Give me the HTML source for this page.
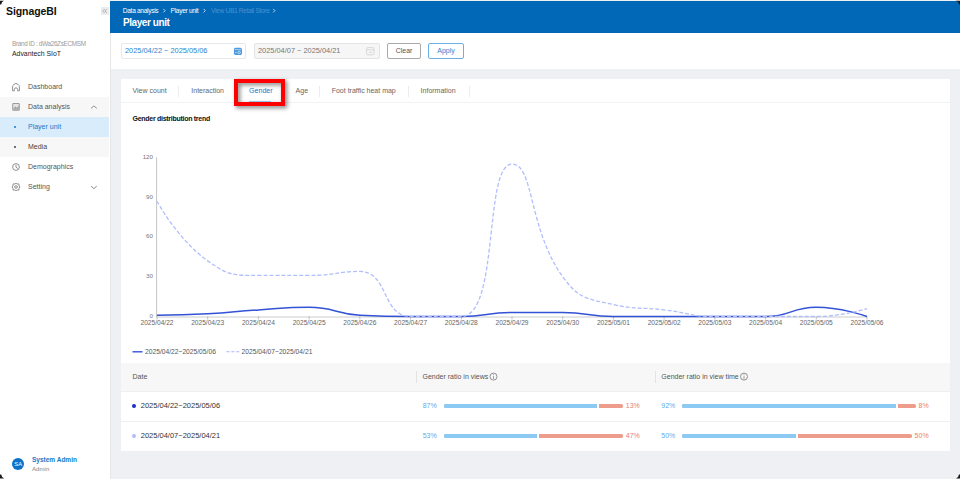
<!DOCTYPE html>
<html><head><meta charset="utf-8"><style>
html,body{margin:0;padding:0;width:960px;height:480px;overflow:hidden;background:#fff;font-family:"Liberation Sans", sans-serif;}
</style></head><body>
<div style="position:relative;width:960px;height:480px;overflow:hidden;">
<div style="position:absolute;left:110px;top:0px;width:850px;height:480px;background:#eff0f4"></div>
<div style="position:absolute;left:0px;top:0px;width:110px;height:480px;background:#fff"></div>
<div style="position:absolute;left:109.7px;top:33px;width:1.2px;height:447px;background:#e6e6ea"></div>
<div style="position:absolute;left:110px;top:1px;width:850px;height:32px;background:#0068b7"></div>
<div style="position:absolute;left:111px;top:33px;width:849px;height:36px;background:#fff"></div>
<div style="position:absolute;top:5.20px;line-height:12px;font-size:10.5px;color:#111;font-weight:bold;white-space:nowrap;letter-spacing:-0.08px;left:6px;">SignageBI</div>
<div style="position:absolute;left:101px;top:7px;width:8px;height:8px;background:#ececec"></div>
<svg style="position:absolute;left:0;top:0" width="110" height="20"><g fill="none" stroke="#9a9a9a" stroke-width="0.7"><path d="M104.6,9 L102.6,11 L104.6,13"/><path d="M106.8,9 L104.8,11 L106.8,13"/></g></svg>
<div style="position:absolute;top:37.60px;line-height:12px;font-size:6.4px;color:#9a9a9a;font-weight:normal;white-space:nowrap;letter-spacing:-0.34px;left:12px;">Brand ID : dWa26ZsECMSM</div>
<div style="position:absolute;top:47.50px;line-height:12px;font-size:6.9px;color:#222;font-weight:normal;white-space:nowrap;left:12px;">Advantech SIoT</div>
<div style="position:absolute;left:0px;top:97px;width:109.2px;height:20px;background:#f7f7f7"></div>
<div style="position:absolute;left:0px;top:117px;width:109.2px;height:20px;background:#d9ecfb"></div>
<div style="position:absolute;left:0px;top:137px;width:109.2px;height:20px;background:#f7f7f7"></div>
<div style="position:absolute;top:81.00px;line-height:12px;font-size:7px;color:#555;font-weight:normal;white-space:nowrap;left:28px;">Dashboard</div>
<div style="position:absolute;top:101.00px;line-height:12px;font-size:7px;color:#555;font-weight:normal;white-space:nowrap;left:28px;">Data analysis</div>
<div style="position:absolute;top:121.00px;line-height:12px;font-size:7px;color:#1a78c8;font-weight:normal;white-space:nowrap;left:28px;">Player unit</div>
<div style="position:absolute;top:141.00px;line-height:12px;font-size:7px;color:#444;font-weight:normal;white-space:nowrap;left:28px;">Media</div>
<div style="position:absolute;top:161.00px;line-height:12px;font-size:7px;color:#555;font-weight:normal;white-space:nowrap;left:28px;">Demographics</div>
<div style="position:absolute;top:181.00px;line-height:12px;font-size:7px;color:#555;font-weight:normal;white-space:nowrap;left:28px;">Setting</div>
<div style="position:absolute;left:14px;top:126px;width:2px;height:2px;background:#1a78c8;border-radius:1px"></div>
<div style="position:absolute;left:14px;top:146px;width:2px;height:2px;background:#444;border-radius:1px"></div>
<svg style="position:absolute;left:0;top:0" width="110" height="200">
<g fill="none" stroke="#8a8a8a" stroke-width="0.95" stroke-linejoin="round">
<path d="M12.6,90.8 V86.8 Q12.6,85.3 14,84.4 L16,83.4 L18,84.4 Q19.4,85.3 19.4,86.8 V90.8 H17.6 V89.4 Q17.6,87.8 16,87.8 Q14.4,87.8 14.4,89.4 V90.8 Z"/>
<circle cx="16" cy="167" r="3.4"/>
<path d="M16,164.8 V167.2 L17.8,168.6"/>
<circle cx="16" cy="187" r="1.3"/>
<path d="M16,183.3 L17.3,184 L18.9,183.9 L19,185.4 L19.8,187 L19,188.6 L18.9,190.1 L17.3,190 L16,190.7 L14.7,190 L13.1,190.1 L13,188.6 L12.2,187 L13,185.4 L13.1,183.9 L14.7,184 Z"/>
<path d="M91,108.4 L93.9,105.9 L96.8,108.4"/>
<path d="M91,186.1 L93.9,188.6 L96.8,186.1"/>
</g>
<rect x="12.2" y="103.1" width="7.6" height="7.6" rx="1.3" fill="#9a9a9a"/>
<rect x="13.2" y="104.1" width="5.6" height="5.6" rx="0.5" fill="#e4e4e4"/>
<path d="M13.2,108.6 L15.3,106.2 L16.8,107.8 L18.8,105.6 V109.7 H13.2 Z" fill="#a8a8a8"/>
</svg>
<div style="position:absolute;left:12px;top:458px;width:12.4px;height:12.4px;background:#0a72c9;border-radius:50%"></div>
<div style="position:absolute;top:458.20px;line-height:12px;font-size:5.8px;color:#fff;font-weight:normal;white-space:nowrap;left:-81.8px;width:200px;text-align:center;">SA</div>
<div style="position:absolute;top:453.70px;line-height:12px;font-size:6.5px;color:#1a78c8;font-weight:bold;white-space:nowrap;left:32px;">System Admin</div>
<div style="position:absolute;top:463.30px;line-height:12px;font-size:6.1px;color:#888;font-weight:normal;white-space:nowrap;left:32px;">Admin</div>
<div style="position:absolute;top:4.70px;line-height:12px;font-size:6.6px;color:#fff;font-weight:normal;white-space:nowrap;letter-spacing:-0.31px;left:122.8px;">Data analysis</div>
<div style="position:absolute;top:4.70px;line-height:12px;font-size:6.6px;color:#fff;font-weight:normal;white-space:nowrap;letter-spacing:-0.32px;left:170.6px;">Player unit</div>
<div style="position:absolute;top:4.70px;line-height:12px;font-size:6.6px;color:#4a92d4;font-weight:normal;white-space:nowrap;letter-spacing:-0.31px;left:211px;">View UB1 Retail Store</div>
<svg style="position:absolute;left:0;top:0" width="300" height="33"><g fill="none" stroke="#e8f0f8" stroke-width="0.8">
<path d="M163.4,8.9 L165.1,10.65 L163.4,12.4"/><path d="M203.6,8.9 L205.3,10.65 L203.6,12.4"/><path d="M273.2,8.9 L274.9,10.65 L273.2,12.4"/></g></svg>
<div style="position:absolute;top:16.60px;line-height:12px;font-size:10px;color:#fff;font-weight:bold;white-space:nowrap;letter-spacing:-0.43px;left:123px;">Player unit</div>
<div style="position:absolute;left:120.8px;top:43.2px;width:124.8px;height:15.4px;background:#fff;border:0.8px solid #e8e8e8;border-radius:2px;box-sizing:border-box"></div>
<div style="position:absolute;top:45.20px;line-height:12px;font-size:7.4px;color:#2a84cf;font-weight:normal;white-space:nowrap;left:125px;">2025/04/22 ~ 2025/05/06</div>
<div style="position:absolute;left:254.3px;top:43.2px;width:125.3px;height:15.4px;background:#f6f6f6;border:0.8px solid #e4e4e4;border-radius:2px;box-sizing:border-box"></div>
<div style="position:absolute;top:45.20px;line-height:12px;font-size:7.4px;color:#777;font-weight:normal;white-space:nowrap;left:258px;">2025/04/07 ~ 2025/04/21</div>
<svg style="position:absolute;left:0;top:0" width="400" height="70">
<rect x="233.9" y="47.8" width="8.1" height="7.1" rx="1.6" fill="#4a9be0"/>
<path d="M234.8,49.6 H241.1" stroke="#fff" stroke-width="0.5"/>
<circle cx="236" cy="52.6" r="0.6" fill="#fff"/><circle cx="239.2" cy="52.4" r="1.2" fill="none" stroke="#fff" stroke-width="0.6"/>
<g fill="none" stroke="#d0d0d0" stroke-width="0.8"><rect x="366.6" y="47.6" width="7.4" height="7.2" rx="1.2"/><path d="M366.6,49.8 H374"/><path d="M369,52.4 H372"/></g>
</svg>
<div style="position:absolute;left:387px;top:43px;width:34px;height:16px;background:#fff;border:1px solid #aaa;border-radius:2px;box-sizing:border-box"></div>
<div style="position:absolute;top:45.00px;line-height:12px;font-size:7px;color:#555;font-weight:normal;white-space:nowrap;left:304px;width:200px;text-align:center;">Clear</div>
<div style="position:absolute;left:428px;top:43px;width:36px;height:16px;background:#fff;border:1px solid #6cb0e8;border-radius:2px;box-sizing:border-box"></div>
<div style="position:absolute;top:45.00px;line-height:12px;font-size:7px;color:#2a84cf;font-weight:normal;white-space:nowrap;left:346px;width:200px;text-align:center;">Apply</div>
<div style="position:absolute;left:121px;top:79px;width:829px;height:23px;background:#fff"></div>
<div style="position:absolute;left:121px;top:103px;width:829px;height:348px;background:#fff"></div>
<div style="position:absolute;left:121px;top:102px;width:829px;height:1px;background:#f1f2f5"></div>
<div style="position:absolute;top:85.00px;line-height:12px;font-size:7px;color:#666;font-weight:normal;white-space:nowrap;left:132.5px;">View count</div>
<div style="position:absolute;top:85.00px;line-height:12px;font-size:7px;color:#666;font-weight:normal;white-space:nowrap;left:191.3px;">Interaction</div>
<div style="position:absolute;top:85.00px;line-height:12px;font-size:7.1px;color:#1a78c8;font-weight:normal;white-space:nowrap;left:249px;">Gender</div>
<div style="position:absolute;top:85.00px;line-height:12px;font-size:7px;color:#666;font-weight:normal;white-space:nowrap;left:295.6px;">Age</div>
<div style="position:absolute;top:85.00px;line-height:12px;font-size:7px;color:#666;font-weight:normal;white-space:nowrap;left:331.7px;">Foot traffic heat map</div>
<div style="position:absolute;top:85.00px;line-height:12px;font-size:7px;color:#666;font-weight:normal;white-space:nowrap;left:420.6px;">Information</div>
<div style="position:absolute;left:178.35px;top:85.5px;width:0.8px;height:11.5px;background:#ececec"></div>
<div style="position:absolute;left:236.6px;top:85.5px;width:0.8px;height:11.5px;background:#ececec"></div>
<div style="position:absolute;left:282.8px;top:85.5px;width:0.8px;height:11.5px;background:#ececec"></div>
<div style="position:absolute;left:319.2px;top:85.5px;width:0.8px;height:11.5px;background:#ececec"></div>
<div style="position:absolute;left:408.1px;top:85.5px;width:0.8px;height:11.5px;background:#ececec"></div>
<div style="position:absolute;left:469.2px;top:85.5px;width:0.8px;height:11.5px;background:#ececec"></div>
<div style="position:absolute;left:249px;top:101px;width:22px;height:1px;background:#9fd0f3"></div>
<div style="position:absolute;top:113.10px;line-height:12px;font-size:7px;color:#111;font-weight:bold;white-space:nowrap;letter-spacing:-0.28px;left:132.5px;">Gender distribution trend</div>
<svg style="position:absolute;left:0;top:0" width="960" height="480">
<line x1="156.6" y1="157.3" x2="156.6" y2="317.0" stroke="#c4c4c4" stroke-width="1"/>
<line x1="157.0" y1="317.0" x2="867.0" y2="317.0" stroke="#ccc" stroke-width="1"/>
<line x1="157.00" y1="316.5" x2="157.00" y2="319.5" stroke="#999" stroke-width="0.6"/>
<line x1="207.71" y1="316.5" x2="207.71" y2="319.5" stroke="#999" stroke-width="0.6"/>
<line x1="258.43" y1="316.5" x2="258.43" y2="319.5" stroke="#999" stroke-width="0.6"/>
<line x1="309.14" y1="316.5" x2="309.14" y2="319.5" stroke="#999" stroke-width="0.6"/>
<line x1="359.86" y1="316.5" x2="359.86" y2="319.5" stroke="#999" stroke-width="0.6"/>
<line x1="410.57" y1="316.5" x2="410.57" y2="319.5" stroke="#999" stroke-width="0.6"/>
<line x1="461.29" y1="316.5" x2="461.29" y2="319.5" stroke="#999" stroke-width="0.6"/>
<line x1="512.00" y1="316.5" x2="512.00" y2="319.5" stroke="#999" stroke-width="0.6"/>
<line x1="562.71" y1="316.5" x2="562.71" y2="319.5" stroke="#999" stroke-width="0.6"/>
<line x1="613.43" y1="316.5" x2="613.43" y2="319.5" stroke="#999" stroke-width="0.6"/>
<line x1="664.14" y1="316.5" x2="664.14" y2="319.5" stroke="#999" stroke-width="0.6"/>
<line x1="714.86" y1="316.5" x2="714.86" y2="319.5" stroke="#999" stroke-width="0.6"/>
<line x1="765.57" y1="316.5" x2="765.57" y2="319.5" stroke="#999" stroke-width="0.6"/>
<line x1="816.29" y1="316.5" x2="816.29" y2="319.5" stroke="#999" stroke-width="0.6"/>
<line x1="867.00" y1="316.5" x2="867.00" y2="319.5" stroke="#999" stroke-width="0.6"/>
<path d="M157.00,315.18 C157.00,315.18 182.39,315.17 207.71,313.85 C233.11,312.52 233.05,311.53 258.43,309.88 C283.76,308.22 283.92,307.23 309.14,307.23 C334.64,307.23 334.35,313.83 359.86,315.18 C385.06,316.50 385.21,316.50 410.57,316.50 C435.92,316.50 435.97,316.50 461.29,316.50 C486.68,316.50 486.60,312.52 512.00,312.52 C537.32,312.52 537.40,312.52 562.71,312.52 C588.11,312.52 588.03,316.50 613.43,316.50 C638.75,316.50 638.79,316.50 664.14,316.50 C689.50,316.50 689.50,316.50 714.86,316.50 C740.21,316.50 740.42,316.50 765.57,316.50 C791.14,316.50 790.93,307.23 816.29,307.23 C841.64,307.23 867.00,316.50 867.00,316.50" fill="none" stroke="#3352d6" stroke-width="1.5"/>
<path d="M157.00,201.23 C157.00,201.23 177.42,239.23 207.71,260.85 C228.14,275.43 232.57,275.43 258.43,275.43 C283.28,275.43 283.82,275.43 309.14,275.43 C334.54,275.43 338.12,271.45 359.86,271.45 C388.84,271.45 381.55,316.50 410.57,316.50 C432.27,316.50 449.11,316.50 461.29,316.50 C499.83,316.50 483.33,164.12 512.00,164.12 C534.05,164.12 528.18,228.92 562.71,276.75 C578.89,299.15 586.47,298.56 613.43,304.57 C637.19,309.88 638.82,306.90 664.14,309.88 C689.54,312.86 689.39,316.50 714.86,316.50 C740.11,316.50 740.21,316.50 765.57,316.50 C790.93,316.50 791.08,316.50 816.29,316.50 C841.80,316.50 867.00,308.55 867.00,308.55" fill="none" stroke="#b1befb" stroke-width="1.3" stroke-dasharray="4 2"/>
<line x1="132.5" y1="351.8" x2="142.5" y2="351.8" stroke="#3352d6" stroke-width="1.4"/>
<line x1="226.4" y1="351.8" x2="239.3" y2="351.8" stroke="#a9b8fb" stroke-width="1.1" stroke-dasharray="3.2 1.7"/>
</svg>
<div style="position:absolute;top:309.90px;line-height:12px;font-size:6.2px;color:#777;font-weight:normal;white-space:nowrap;right:807px;">0</div>
<div style="position:absolute;top:270.15px;line-height:12px;font-size:6.2px;color:#777;font-weight:normal;white-space:nowrap;right:807px;">30</div>
<div style="position:absolute;top:230.40px;line-height:12px;font-size:6.2px;color:#777;font-weight:normal;white-space:nowrap;right:807px;">60</div>
<div style="position:absolute;top:190.65px;line-height:12px;font-size:6.2px;color:#777;font-weight:normal;white-space:nowrap;right:807px;">90</div>
<div style="position:absolute;top:150.90px;line-height:12px;font-size:6.2px;color:#777;font-weight:normal;white-space:nowrap;right:807px;">120</div>
<div style="position:absolute;top:317.20px;line-height:12px;font-size:6.6px;color:#666;font-weight:normal;white-space:nowrap;left:57.0px;width:200px;text-align:center;">2025/04/22</div>
<div style="position:absolute;top:317.20px;line-height:12px;font-size:6.6px;color:#666;font-weight:normal;white-space:nowrap;left:107.71428571428572px;width:200px;text-align:center;">2025/04/23</div>
<div style="position:absolute;top:317.20px;line-height:12px;font-size:6.6px;color:#666;font-weight:normal;white-space:nowrap;left:158.42857142857144px;width:200px;text-align:center;">2025/04/24</div>
<div style="position:absolute;top:317.20px;line-height:12px;font-size:6.6px;color:#666;font-weight:normal;white-space:nowrap;left:209.1428571428571px;width:200px;text-align:center;">2025/04/25</div>
<div style="position:absolute;top:317.20px;line-height:12px;font-size:6.6px;color:#666;font-weight:normal;white-space:nowrap;left:259.8571428571429px;width:200px;text-align:center;">2025/04/26</div>
<div style="position:absolute;top:317.20px;line-height:12px;font-size:6.6px;color:#666;font-weight:normal;white-space:nowrap;left:310.57142857142856px;width:200px;text-align:center;">2025/04/27</div>
<div style="position:absolute;top:317.20px;line-height:12px;font-size:6.6px;color:#666;font-weight:normal;white-space:nowrap;left:361.2857142857143px;width:200px;text-align:center;">2025/04/28</div>
<div style="position:absolute;top:317.20px;line-height:12px;font-size:6.6px;color:#666;font-weight:normal;white-space:nowrap;left:412.0px;width:200px;text-align:center;">2025/04/29</div>
<div style="position:absolute;top:317.20px;line-height:12px;font-size:6.6px;color:#666;font-weight:normal;white-space:nowrap;left:462.7142857142858px;width:200px;text-align:center;">2025/04/30</div>
<div style="position:absolute;top:317.20px;line-height:12px;font-size:6.6px;color:#666;font-weight:normal;white-space:nowrap;left:513.4285714285714px;width:200px;text-align:center;">2025/05/01</div>
<div style="position:absolute;top:317.20px;line-height:12px;font-size:6.6px;color:#666;font-weight:normal;white-space:nowrap;left:564.1428571428571px;width:200px;text-align:center;">2025/05/02</div>
<div style="position:absolute;top:317.20px;line-height:12px;font-size:6.6px;color:#666;font-weight:normal;white-space:nowrap;left:614.8571428571429px;width:200px;text-align:center;">2025/05/03</div>
<div style="position:absolute;top:317.20px;line-height:12px;font-size:6.6px;color:#666;font-weight:normal;white-space:nowrap;left:665.5714285714286px;width:200px;text-align:center;">2025/05/04</div>
<div style="position:absolute;top:317.20px;line-height:12px;font-size:6.6px;color:#666;font-weight:normal;white-space:nowrap;left:716.2857142857143px;width:200px;text-align:center;">2025/05/05</div>
<div style="position:absolute;top:317.20px;line-height:12px;font-size:6.6px;color:#666;font-weight:normal;white-space:nowrap;left:767.0px;width:200px;text-align:center;">2025/05/06</div>
<div style="position:absolute;top:345.80px;line-height:12px;font-size:6.7px;color:#555;font-weight:normal;white-space:nowrap;left:145px;">2025/04/22~2025/05/06</div>
<div style="position:absolute;top:345.80px;line-height:12px;font-size:6.7px;color:#555;font-weight:normal;white-space:nowrap;left:241.5px;">2025/04/07~2025/04/21</div>
<div style="position:absolute;left:121px;top:363px;width:829px;height:28px;background:#f7f7f7"></div>
<div style="position:absolute;left:121px;top:390.6px;width:829px;height:0.8px;background:#efefef"></div>
<div style="position:absolute;left:121px;top:421.2px;width:829px;height:0.8px;background:#efefef"></div>
<div style="position:absolute;top:370.70px;line-height:12px;font-size:7px;color:#555;font-weight:normal;white-space:nowrap;left:132.5px;">Date</div>
<div style="position:absolute;left:416px;top:371px;width:0.8px;height:11.5px;background:#e3e3e3"></div>
<div style="position:absolute;left:654.5px;top:371px;width:0.8px;height:11.5px;background:#e3e3e3"></div>
<div style="position:absolute;top:370.70px;line-height:12px;font-size:7px;color:#555;font-weight:normal;white-space:nowrap;left:422.5px;">Gender ratio in views</div>
<div style="position:absolute;top:370.70px;line-height:12px;font-size:7px;color:#555;font-weight:normal;white-space:nowrap;left:661.3px;">Gender ratio in view time</div>
<svg style="position:absolute;left:0;top:0" width="960" height="480">
<g fill="none" stroke="#808080" stroke-width="0.85"><circle cx="493.5" cy="376.6" r="3.5"/><circle cx="744" cy="376.6" r="3.5"/></g>
<g stroke="#808080" stroke-width="0.8"><line x1="493.5" y1="376.2" x2="493.5" y2="378.8"/><line x1="744" y1="376.2" x2="744" y2="378.8"/></g>
<g fill="#808080"><circle cx="493.5" cy="374.8" r="0.5"/><circle cx="744" cy="374.8" r="0.5"/></g>
</svg>
<div style="position:absolute;left:132.3px;top:403.8px;width:3.8px;height:3.8px;background:#1d2ecc;border-radius:50%"></div>
<div style="position:absolute;left:132.3px;top:433.8px;width:3.8px;height:3.8px;background:#b3bdf5;border-radius:50%"></div>
<div style="position:absolute;top:399.60px;line-height:12px;font-size:7.5px;color:#333;font-weight:normal;white-space:nowrap;left:140.75px;">2025/04/22~2025/05/06</div>
<div style="position:absolute;top:429.70px;line-height:12px;font-size:7.5px;color:#333;font-weight:normal;white-space:nowrap;left:140.75px;">2025/04/07~2025/04/21</div>
<div style="position:absolute;top:399.80px;line-height:12px;font-size:7px;color:#5aacf0;font-weight:normal;white-space:nowrap;left:422.7px;">87%</div>
<div style="position:absolute;left:443.9px;top:403.9px;width:153.39999999999998px;height:3.9px;background:#8cc9f3;border-radius:1.2px 0 0 1.2px"></div>
<div style="position:absolute;left:599.1px;top:403.9px;width:23.899999999999977px;height:3.9px;background:#ee9d8c;border-radius:0 1.6px 1.6px 0"></div>
<div style="position:absolute;top:399.80px;line-height:12px;font-size:7px;color:#e8806b;font-weight:normal;white-space:nowrap;right:320.20000000000005px;">13%</div>
<div style="position:absolute;top:429.90px;line-height:12px;font-size:7px;color:#5aacf0;font-weight:normal;white-space:nowrap;left:422.7px;">53%</div>
<div style="position:absolute;left:443.9px;top:434px;width:93.0px;height:3.9px;background:#8cc9f3;border-radius:1.2px 0 0 1.2px"></div>
<div style="position:absolute;left:539px;top:434px;width:84px;height:3.9px;background:#ee9d8c;border-radius:0 1.6px 1.6px 0"></div>
<div style="position:absolute;top:429.90px;line-height:12px;font-size:7px;color:#e8806b;font-weight:normal;white-space:nowrap;right:320.20000000000005px;">47%</div>
<div style="position:absolute;top:399.80px;line-height:12px;font-size:7px;color:#5aacf0;font-weight:normal;white-space:nowrap;left:661.3px;">92%</div>
<div style="position:absolute;left:682.3px;top:403.9px;width:213.9000000000001px;height:3.9px;background:#8cc9f3;border-radius:1.2px 0 0 1.2px"></div>
<div style="position:absolute;left:897.9px;top:403.9px;width:17.700000000000045px;height:3.9px;background:#ee9d8c;border-radius:0 1.6px 1.6px 0"></div>
<div style="position:absolute;top:399.80px;line-height:12px;font-size:7px;color:#e8806b;font-weight:normal;white-space:nowrap;right:31.399999999999977px;">8%</div>
<div style="position:absolute;top:429.90px;line-height:12px;font-size:7px;color:#5aacf0;font-weight:normal;white-space:nowrap;left:661.3px;">50%</div>
<div style="position:absolute;left:682.3px;top:434px;width:113.70000000000005px;height:3.9px;background:#8cc9f3;border-radius:1.2px 0 0 1.2px"></div>
<div style="position:absolute;left:797.6px;top:434px;width:114.29999999999995px;height:3.9px;background:#ee9d8c;border-radius:0 1.6px 1.6px 0"></div>
<div style="position:absolute;top:429.90px;line-height:12px;font-size:7px;color:#e8806b;font-weight:normal;white-space:nowrap;right:31.399999999999977px;">50%</div>
<div style="position:absolute;left:234px;top:79px;width:51px;height:27px;border:4px solid #ff0000;box-sizing:border-box;filter:drop-shadow(2px 2px 2px rgba(0,0,0,0.5))"></div>
<div style="position:absolute;left:0px;top:479px;width:960px;height:1px;background:#fff"></div>
<svg style="position:absolute;left:0;top:0" width="960" height="480">
<path d="M0,0.8 H4 Q1.6,1.4 1.2,4.6 H0 Z" fill="#1a1a1a"/>
<path d="M0,478.6 H4.2 Q1.6,477.8 1.2,474.6 H0 Z" fill="#1a1a1a"/>
<path d="M960,0.8 H955.6 Q958.6,1.4 958.9,4.6 H960 Z" fill="#1a1a1a"/>
<path d="M960,478.6 H956 Q958.6,477.8 958.9,474.6 H960 Z" fill="#1a1a1a"/>
</svg>
</div></body></html>
